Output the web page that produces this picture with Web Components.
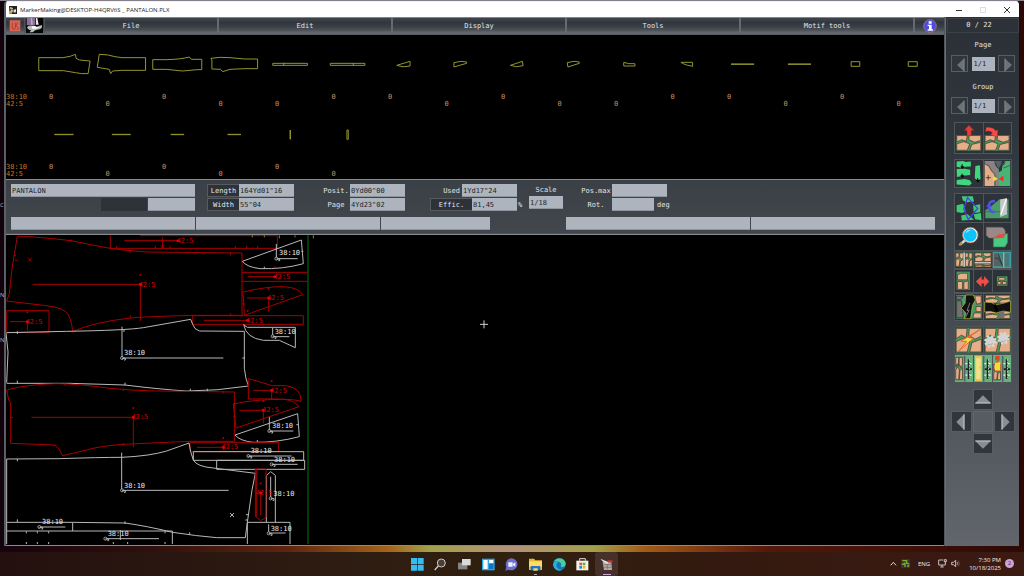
<!DOCTYPE html>
<html lang="en">
<head>
<meta charset="utf-8">
<title>MarkerMaking</title>
<style>
html,body{margin:0;height:100%}
body{font-family:"DejaVu Sans Mono",monospace;font-size:7px;line-height:8px;color:#e2e5e8;background:#14030c}
</style>
</head>
<body>
<mm-desktop></mm-desktop>
<script>
const BASE = `*{box-sizing:border-box}button,input{font:inherit;color:inherit;margin:0;padding:0;border:0;border-radius:0;background:none;min-width:0}svg{display:block}`;
function define(name, html, setup) {
  customElements.define(name, class extends HTMLElement {
    constructor() {
      super();
      this.attachShadow({mode: 'open'});
    }
    connectedCallback() {
      this.shadowRoot.innerHTML = `<style>${BASE}</style>` + (typeof html === 'function' ? html(this) : html);
      if (setup) setup(this);
    }
  });
}

/* ---------- title bar ---------- */
define('mm-titlebar', `
<style>
:host{display:flex;align-items:center;height:16px;background:#fff;color:#1c1c1c;font-family:"Open Sans","Noto Sans",sans-serif;padding-left:3px;border-top:1px solid #f0f0f0}
h1{font:inherit;font-size:6px;margin:0 auto 0 3px}
button{width:24px;height:14px;display:grid;place-items:center}
</style>
<svg width="8" height="8" viewBox="0 0 24 24"><path fill="#222" d="M0 0h24v24H2z"/><path fill="#d9c9a0" d="M3 3l9 3v5l8-3v12l-12-2-4-7z"/><path fill="#d9a52a" d="M0 15h9v8H0z"/><path fill="#eee" d="M12 12l9-3v9z"/><path stroke="#222" stroke-width="2" d="M3 10h17M14 2l-2 20"/></svg>
<h1>MarkerMaking@DESKTOP-H4QRV6S _ PANTALON.PLX</h1>
<button aria-label="Minimize"><svg width="6" height="6"><path d="M0 3.5h6" stroke="#333"/></svg></button>
<button aria-label="Maximize" disabled><svg width="6" height="6"><path d="M.5.5h5v5h-5z" fill="none" stroke="#ddd"/></svg></button>
<button aria-label="Close"><svg width="6" height="6"><path d="M0 0l6 6M6 0L0 6" stroke="#333"/></svg></button>`);

/* ---------- menu bar ---------- */
define('mm-menubar', `
<style>
:host{display:flex;height:17px;background:linear-gradient(#80858a 0 1px,#3c4249 1px 3px,#2f353b 5px,#3b4147 60%,#52575e 14px,#63676c 15px)}
button{display:grid;place-items:center;flex:1;border-right:2px solid #666a6e;height:15px;margin-top:1px}
.tool{flex:none;width:19px;border-right:1px solid #4c5157}
.tool+.tool{width:20px}
.info{flex:none;width:29px;border:0}
</style>
<button class="tool" aria-label="Quit"><svg width="12" height="12" viewBox="0 0 36 36"><path fill="#d96454" d="M2 1h32v33H2z"/><path d="M10 8v17c2 5 8 3 9-1V8M26 7l-5 10 8 8-5 5" fill="none" stroke="#8f2d25" stroke-width="2"/></svg></button>
<button class="tool" aria-label="Marker"><svg width="17" height="15" viewBox="0 0 51 45"><path fill="#050505" d="M0 0h51v45H0z"/><path fill="#8a6f9b" d="M2 0h26v22H2z"/><path fill="#b6a5c2" d="M14 0h4l3 20h-6z"/><path fill="#e8e8e8" d="M30 0h4l4 20h-8z"/><path fill="#b9bcbc" d="M3 28q4-6 14-5l16 3 14-5q4 8-6 13l-12 2-9 7H10l6-6q-11-1-13-9z"/><path fill="#f7f7f7" d="M17 24q10-2 14 3l11-1-12 7-12-1z"/></svg></button>
<button>File</button><button>Edit</button><button>Display</button><button>Tools</button><button>Motif tools</button>
<button class="info" aria-label="Information"><svg width="14" height="14" viewBox="0 0 42 42"><circle cx="21" cy="21" r="19" fill="#4b4de0" stroke="#c87a7c" stroke-width="2"/><path fill="#fff" d="M17 7h9v7h-9zM14 17h12v14h4v4H14v-4h4v-10h-4z"/></svg></button>`);

/* ---------- piece bin ---------- */
const BIN = [[
 'M118 173H190Q215 170 228 163L230 175 240 180 272 183 266 221Q245 222 228 218L192 212H118z',
 'M298 163Q325 163 345 170L366 173H437V211H366L338 213 332 221 328 208 292 202z',
 'M460 179H500Q545 178 570 171L576 178H607V209H592L550 213 500 208H460z',
 'M633 175Q660 170 690 173L735 177H773V206H735L690 208 668 215 662 208 636 207 636 180z',
 'M820 190H924V196H820zM853 188V197',
 'M991 190H1095V196H991zM1060 189V197',
 'M1192 196L1232 184V198Q1210 204 1192 196z',
 'M1362 188Q1385 181 1400 186L1400 190 1362 201z',
 'M1533 196L1569 184 1571 197Q1550 204 1533 196z',
 'M1702 188Q1725 181 1738 186L1738 190 1704 201z',
 'M1873 187L1888 191 1906 191 1907 198H1873z',
 'M2043 187H2078V199L2060 195 2050 191z',
 'M2195 192H2264M2195 193H2264',
 'M2364 192H2433M2364 193H2433',
 'M2555 185H2581V199H2555z',
 'M2725 185H2752V199H2725z'],
 ['M165 403H222M165 404H222','M336 403H392M336 404H392','M514 403H554M514 404H554','M683 403H723M683 404H723',
 'M872 390V418M873 390V418','M1041 390H1045V418H1041z']];
/* zero-based columns whose count belongs to size 42:5 */
const LOWER = [[1,3,4,7,9,10,13,15],[1,3,5]];
define('mm-bin', () => `
<style>
:host{display:block;background:#000;border-top:1px solid #5a5f65;border-bottom:1px solid #888c90;padding-bottom:1px}
.row{display:grid;grid-template-columns:30px 1fr;line-height:7px}
.size{align-self:end;color:#c47628}
.cells{display:grid;grid-template-columns:repeat(16,minmax(0,1fr));padding-right:4px}
.n{height:14px;padding-left:13px;color:#c2906c}
.odd .n{padding-top:7px}
svg{width:100%;overflow:visible}
.first svg{height:59px}.second svg{height:56px}
path{fill:none;stroke:#94942e;stroke-width:3}
</style>` + BIN.map((row, r) => `<div class="row ${r ? 'second' : 'first'}"><div class="size">38:10<br>42:5</div><div class="cells">${
 row.map((d, i) => `<div class="${LOWER[r].includes(i) ? 'odd' : 'even'}"><svg viewBox="${110 + 169.5 * i} ${r ? 324 : 105} 169 ${r ? 168 : 177}"><path d="${d}"/></svg><div class="n">0</div></div>`).join('')
 }</div></div>`).join(''));

/* ---------- marker information ---------- */
define('mm-info', `
<style>
:host{display:block;height:54px;background:linear-gradient(#3a4046,#42474d);border-bottom:1px solid #4c5157;padding:4px 9px 0 5px}
.top{display:flex;align-items:flex-start;height:33px}
.g{display:grid;grid-auto-rows:13px;row-gap:1px;align-items:center}
input{background:#adb4be;color:#22262a;height:13px;width:100%;padding:0 1px;box-shadow:inset 0 -1px #9096a0}
.g button{background:#2d3239;height:13px;border:1px solid #575b60;border-right:0}
label{white-space:nowrap}
.name{width:184px}
.name div{display:grid;grid-template-columns:46px 47px;gap:1px;justify-content:end}
.name i{background:#2e333a;height:13px}
.len{grid-template-columns:32px 55px;margin-left:12px}
.pos{grid-template-columns:28px 55px;margin-left:28px}
.pos label{text-align:center}
.used{width:94px;margin-left:25px}
.used div{display:grid;align-items:center}
.used .a{grid-template-columns:32px 55px}
.used .a label{text-align:right;padding-right:2px}
.used .b{grid-template-columns:42px 45px 7px}
.used span{padding-left:1px}
.scale{width:34px;margin-left:5px;text-align:center;grid-auto-rows:11px 13px}
.rot{grid-template-columns:32px 42px 18px;margin-left:17px}
.rot label{text-align:center}
.rot .wide{grid-column:2/4;width:55px}
.rot span{padding-left:3px}
.bars{display:grid;grid-template-columns:184fr 184fr 108fr 74fr 184fr 184fr;column-gap:1px}
.bars .gap{grid-column:5}
</style>
<div class="top">
<div class="g name"><input aria-label="Marker name" value="PANTALON"><div><i></i><input aria-label="Variant"></div></div>
<div class="g len"><button id="bl">Length</button><input aria-labelledby="bl" value="164Yd01&quot;16"><button id="bw">Width</button><input aria-labelledby="bw" value="55&quot;04"></div>
<div class="g pos"><label for="posit">Posit.</label><input id="posit" value="0Yd00&quot;00"><label for="page">Page</label><input id="page" value="4Yd23&quot;02"></div>
<div class="g used"><div class="a"><label for="used">Used</label><input id="used" value="1Yd17&quot;24"></div><div class="b"><button id="be">Effic.</button><input aria-labelledby="be" value="81,45"><span>%</span></div></div>
<div class="g scale"><label for="scale">Scale</label><input id="scale" value="1/18"></div>
<div class="g rot"><label for="pm">Pos.max</label><input id="pm" class="wide"><label for="rot">Rot.</label><input id="rot"><span>deg</span></div>
</div>
<div class="bars"><input aria-label="Message 1"><input aria-label="Message 2"><input aria-label="Message 3"><input class="gap" aria-label="Message 4"><input aria-label="Message 5"></div>`);

/* ---------- marker canvas; drawing units are a third of a pixel ---------- */
const tag = (x, y, dx, dy, c, t) => `<circle class="d${c}" cx="${dx}" cy="${dy}" r="4.5"/><text class="${c}" x="${x}" y="${y}">${t}</text>`;
const W = (x, y, dx, dy) => tag(x, y, dx, dy, 'w', '38:10') + `<path class="wl" d="M${dx} ${dy + 1}h10v5h-4"/>`;
const R = (x, y, dx, dy) => tag(x, y, dx, dy, 'r', '42:5') + `<path class="rl" d="M${dx - 3} ${dy - 28}h6m-3 -3v6"/>`;
define('mm-canvas', () => `
<style>
:host{display:block;background:#000;border-top:1px solid #888c90;border-bottom:1px solid #888c90;min-height:0;overflow:hidden}
svg{width:938px;height:309px}
path{fill:none;stroke-width:3}
.wl{stroke:#b8b8b8}.rl{stroke:#a80000}.grn{stroke:#045804;stroke-width:4}
text{font-size:21px;font-family:"DejaVu Sans Mono",monospace}
.w{fill:#e8e8e8}.r{fill:#d40000}.dw{fill:#000;stroke:#ddd;stroke-width:2}.dr{fill:#f00000}
</style>
<svg viewBox="18 705 2814 927" role="img" aria-label="Marker layout">
<g transform="translate(0 696)">
<path class="rl" d="M20 207L28 185 36 110 52 13 75 13Q150 18 213 26 270 38 331 49 370 55 440 60L726 63V250H580Q430 254 393 258 280 270 218 299 214 250 195 238 180 225 130 220L20 207M98 157H421V268M331 11V49H832V11M420 11H832M373 26H536M488 16V50M482 40l12 10m0-10l-12 10M84 77l12 12m0-12l-12 12M20 236H147V301H20zM30 269H82V295M726 121H922M726 148H922M744 134H825M726 181Q800 163 850 164 895 166 908 188L733 250 730 195zM741 198H806V238M578 251H910V277H578zM611 265H743M391 54v8M692 62v8M391 250v8M692 244v8M41 70h7M45 85h7M350 42v7M466 42v7M510 42v7M706 42v7M740 42v7M773 42v7M213 22v8M728 216h7"/>
<path class="wl" d="M904 24L910 95Q850 112 780 110 740 105 727 88zM829 36V80H893M793 104v7M904 58h6M20 302L200 298Q380 295 430 287L572 262 578 277Q582 292 598 297L733 298V409L738 440 745 460M18 302L24 360 20 452M731 278L742 286H886V347L838 325H790Q738 318 731 278M818 288V314H868M366 284V378H670M52 298v8M372 292v8M727 378h8"/>
${R(416,164,421,157)}${R(530,33,534,26)}${R(77,276,82,269)}${R(820,141,824,134)}${R(801,205,806,198)}${R(738,272,743,265)}${W(837,70,829,80)}${W(824,305,818,313)}</g>
<g transform="translate(0 1020)">
<path class="wl" d="M20 130H210L375 135Q480 148 560 153 650 153 745 138M705 285L893 221 898 290Q830 308 760 307 720 303 705 285M808 230V273H880M52 122v8M375 128v8M571 146v8M622 146v8M772 300v8M889 254h7"/>
<path class="rl" d="M20 150Q80 133 170 131 240 132 330 145 400 152 470 153L703 156V304H570Q430 310 370 313 300 318 260 330L187 347Q178 322 165 315L32 310V188L26 180zM94 232H400V322M745 116Q780 125 815 137H860Q905 145 903 184 880 175 745 177zM760 151H815V178M700 192Q760 178 850 178 880 180 897 200L708 264zM718 211H790V250M570 307H836V335H570zM591 322H670V330M32 232h7M195 130v7M370 146v7M669 154v7M370 309v7M700 230h7"/>
${W(372,46,366,54)}${R(394,238,400,232)}${R(810,158,815,151)}${R(786,217,790,211)}${W(816,265,808,273)}${R(664,327,670,322)}</g>
<g transform="translate(0 1320)">
<path class="wl" d="M20 57L180 56Q300 52 365 52 450 48 500 33L567 9 572 35 580 60Q590 80 640 84L766 100 756 150 742 247 736 293H650Q590 288 518 277 440 258 375 249L218 247H20V57M218 247V273M20 273H517V312M20 247V312M580 35H911V61H580zM745 48H875M650 61H914V88H650zM815 73H893M365 38V151H686M799 247V107L812 95 826 106V247M812 110V175M742 312V247H870V312M806 253V279H857M118 261H196M316 296H477M361 270V300M690 219l12 12m0-12l-12 12M79 274v6M112 274v6M146 274v6M79 306v6M112 306v6M146 306v6M340 306v6M383 306v6M495 306v6M495 274v6M52 238v8M52 57v7M375 244v8M569 277v7M738 224h8M736 240h8"/>
<path class="rl" d="M766 87H798V232L782 242 766 230zM770 87V230M782 164V225"/>
${W(752,39,745,48)}${W(822,65,815,73)}${W(372,144,366,151)}${R(767,164,782,158)}${W(820,167,812,175)}${W(126,252,118,261)}${W(323,289,316,296)}${W(812,272,806,280)}</g>
<path class="grn" d="M924 705V1632"/><path stroke="#8a8a24" d="M940 706v9M757 706v6M793 706v6M838 706v9M885 706v6"/>
<path stroke="#d0d0d0" d="M1440 973h24M1452 961v24"/>
</svg>`);

/* ---------- side panel ---------- */
const skin = (x, y, w, h) => { const X = f => (x + w * f).toFixed(1), Y = f => (y + h * f).toFixed(1); return `<path fill="#4a9a68" d="M${x} ${y}h${w}v${h}h-${w}z"/><g fill="#e6ae88" stroke="#3a2c20" stroke-width="2"><path d="M${X(.02)} ${Y(.03)}L${X(.44)} ${Y(.03)} ${X(.4)} ${Y(.4)} ${X(.22)} ${Y(.3)} ${X(.02)} ${Y(.44)}z"/><path d="M${X(.52)} ${Y(.03)}L${X(.98)} ${Y(.03)} ${X(.98)} ${Y(.34)} ${X(.74)} ${Y(.46)} ${X(.5)} ${Y(.3)}z"/><path d="M${X(.02)} ${Y(.56)}L${X(.3)} ${Y(.42)} ${X(.54)} ${Y(.56)} ${X(.44)} ${Y(.97)} ${X(.02)} ${Y(.97)}z"/><path d="M${X(.62)} ${Y(.6)}L${X(.98)} ${Y(.46)} ${X(.98)} ${Y(.97)} ${X(.54)} ${Y(.97)}z"/></g>`; };
const gear = (x, y) => `<circle cx="${x}" cy="${y}" r="15" fill="#cfcfcf" stroke="#d8d8d8" stroke-width="9" stroke-dasharray="6 5.8"/><circle cx="${x}" cy="${y}" r="14" fill="#d4d2d2"/><path d="M${x-8} ${y+9}q8 5 15-3" stroke="#999" stroke-width="2" fill="none"/>`;
const rail = x => `<path fill="#55606a" d="M${x+28} 326h5v78h-5z"/><path stroke="#eee" stroke-width="4" fill="none" d="M${x+33} 349h6m8 0h6M${x+33} 384h6m8 0h6"/><path stroke="#222" stroke-width="5" fill="none" d="M${x+34} 366h20M${x+43} 336v60"/><path stroke="#ddd" stroke-width="3" stroke-dasharray="4 5" d="M${x+46} 336v56"/>`;
const ICONS = {
 place: ['Unplace piece','33 32 85 92', skin(37,69,77,48)+'<path fill="#e33d38" stroke="#8c2320" d="M76 39L92 55H83V71H70V55H61z"/>'],
 turn: ['Return piece','120 32 85 92', skin(122,69,77,48)+'<path fill="#ef4d47" stroke="#8c2320" d="M127 45q22-2 29 11l7-3-2 23-21-8 6-5q-6-9-22-5z"/>'],
 drop: ['Drop pieces','33 143 85 84','<g fill="#3fd67c"><path d="M38 148l20-2 8 3 16-1v15l-18 1-8 4-18-4zM38 171l24-1 18 3v17l-20 2-21 4zM38 205l25-3 16 4 6 10-8 6-39-3zM96 162l14-3 2 44-11 4-7-8z"/></g><path stroke="#000" stroke-width="3" fill="#000" d="M55 156v12l-4-4h9l-5 6M55 186v10l-4-4h9l-5 6M103 199v11l-4-4h9l-5 6"/>'],
 gap: ['Adjust gap','120 143 85 84','<path fill="#e6ae88" d="M122 155q15 4 19 20l12 12v37h-31z"/><path fill="#8b8283" d="M122 146h30q2 18 14 26v52h-13v-34l-12-15q-3-17-19-20z"/><path fill="#56616a" d="M152 146h23q-2 15-10 24z"/><path fill="#49b575" d="M177 161q9-4 7-15h17v78h-36v-42l10-6z"/><path d="M123 155q15 4 19 20l12 12v37M176 158q10-5 10-12M180 168l20-8" fill="none" stroke="#555" stroke-width="3"/><path stroke="#111" stroke-width="2" d="M126 198h15M133 190v16"/><path fill="#eedb43" d="M148 192l15 9-15 10z"/><path fill="#ee2e2e" d="M180 192v18l-15-9z"/>'],
 lasso: ['Select area','33 245 85 84','<g fill="#3fc977"><path d="M54 252h34l4 16-25 2-10-6zM38 279l20-4 8 22-10 6-18-3zM52 311l20-4 20 17-38 2zM89 280l22-4v25l-20 2zM91 307l22-4 2 22-20-3z"/></g><path fill="none" stroke="#4443e6" stroke-width="4" d="M72 256l31 33-29 34-14-32z"/>'],
 flip: ['Flip piece','120 245 85 84','<path fill="#4b9b6b" d="M124 295l15-10 29-24h28v58h-72z"/><path stroke="#317a50" stroke-width="3" d="M124 299h73"/><path fill="#c3c8ca" d="M170 262l21-5v50l-21 8z"/><path stroke="#fff" stroke-width="4" d="M172 308l17-48"/><path fill="none" stroke="#4e52e2" stroke-width="8" d="M154 267q-22-2-18 20 2 14 17 13"/><path fill="#4e52e2" d="M126 284l9-10 11 10z"/>'],
 zoom: ['Zoom','33 332 85 84','<path stroke="#b5e0e0" stroke-width="8" d="M49 398l19-16"/><path stroke="#c08a4c" stroke-width="7" d="M46 400l9-8"/><circle cx="80" cy="369" r="22" fill="#0cc2ff" stroke="#e8f4ee" stroke-width="4"/><circle cx="81" cy="369" r="24" fill="none" stroke="#aa5a34" stroke-width="2"/><path fill="#a5e9ff" d="M66 364q4-14 16-9-9 1-16 9z"/>'],
 overlap: ['Overlap','120 332 85 84','<path fill="#998a88" stroke="#6e6362" stroke-width="2" d="M127 345h44q15 0 15 18v15h-50l-9-8z"/><path fill="#49c981" stroke="#34835a" stroke-width="2" d="M149 377l44-13v27l-8 14h-36z"/><path fill="#ef493e" d="M150 379l15-13h20l-3 11z"/>'],
 cutv: ['Vertical cut','33 10 57 52', skin(35,12,25,46)+skin(65,12,23,46)+'<path stroke="#eee" stroke-width="4" d="M62 12v46"/>'],
 cuth: ['Horizontal cut','91 10 57 52', skin(93,12,53,30)+skin(93,48,53,11)+'<path stroke="#ddd" stroke-width="4" d="M93 45h52"/>'],
 align: ['Align','148 10 57 52','<path fill="#389f9d" d="M148 10h57v52h-57z"/><path fill="#5a5f60" d="M151 14h14l16 42h-30z"/><path fill="#47777e" d="M170 14h30v44h-16z"/><path stroke="#222" stroke-width="2" fill="none" d="M153 30h12l10 18M165 14l14 44"/><path stroke="#e2c84b" stroke-width="3" d="M182 12v48"/>'],
 fit: ['Fit','33 63 57 67','<path fill="#4a9a68" d="M38 68h42v56H38z"/><g fill="#e6ae88" stroke="#3a2c20" stroke-width="2"><path d="M41 78l10-5h22v20H41zM41 98h16v24H41zM61 100l14-4v26H61z"/></g>'],
 width: ['Spread','91 63 57 67','<path fill="#f24c46" d="M97 98l18-17v11h8V81l16 17-16 17v-11h-8v11z"/>'],
 small: ['Reduce','148 63 57 67','<path fill="#4a9a68" stroke="#1d241f" stroke-width="2" d="M159 81h36v31h-36z"/><g fill="#e6ae88" stroke="#3a2c20" stroke-width="2"><path d="M166 86h20v8h-20zM163 98h10v9h-10zM178 98h12v9h-12z"/></g>'],
 bolt: ['Split marker','33 135 85 81', '<path fill="#4a9a68" d="M36 138h80v74H36z"/><path fill="#74706d" stroke="#222" stroke-width="2" d="M38 156h15l6 53H38zM38 141l20 2-6 8-14 3z"/><g fill="#e6ae88" stroke="#3a2c20" stroke-width="2"><path d="M94 141h20v22l-14 4zM98 174h16v16H98zM92 194h22v16H88z"/></g><path fill="#111" stroke="#c1ca37" stroke-width="2" d="M66 138h24l6 16-9 16-6 42H61l6-17-15-16 12-15z"/><path stroke="#787878" stroke-width="3" d="M79 163l-9 24 7-2-12 24" fill="none"/>'],
 tear: ['Join marker','120 135 85 81',skin(123,138,79,26)+skin(123,188,79,24)+'<path fill="#111" stroke="#bfc33c" stroke-width="2" d="M122 160l22 2 10 7 26-5 22-7v35l-22-4-22 6-20-5-16 2z"/><path fill="#737070" d="M166 190h17v20h-17z"/><path stroke="#000" stroke-width="8" d="M152 168l9 20"/>'],
 flash: ['Automatic','33 237 85 81',skin(35,239,81,78)+'<path d="M110 245L51 281l18 1-25 31 46-41-16-2z" fill="#f2de45" stroke="#e9602d" stroke-width="3"/>'],
 gears: ['Process','120 237 85 81',skin(122,239,81,78)+gear(140,282)+gear(180,272)],
 r1: ['Rail placement','33 323 57 82','<path fill="#67b17c" d="M33 323h57v82H33z"/>'+skin(35,328,22,72)+rail(33)],
 r2: ['Rail highlight','91 323 57 82','<path fill="#67b17c" d="M91 323h57v82H91z"/><path fill="#e6c75b" d="M94 326h22v76H94z"/><path fill="#efe08b" d="M98 333h14v24l-7 2 7 8v29H98z"/>'+rail(91)],
 r3: ['Rail paint','148 323 57 82','<path fill="#67b17c" d="M148 323h57v82h-57z"/>'+skin(150,350,22,50)+'<path fill="#e64326" d="M155 326h14v14h-6l9 12v20h-18v-22l7-11-6-1z"/><path fill="#f3de36" d="M154 347l17-3v26h-17z"/>'+rail(148)],
};
define('mm-icon', el => { const [label, box, art] = ICONS[el.getAttribute('name')]; return `
<style>:host{display:block;min-width:0;min-height:0}button{width:100%;height:100%;display:block;background:#2d3338;overflow:hidden}svg{width:100%;height:100%}</style>
<button aria-label="${label}"><svg viewBox="${box}" preserveAspectRatio="none">${art}</svg></button>`; });
define('mm-arrow', el => { const a = {left:180,right:0,up:270,down:90}[el.getAttribute('dir')]; const big = el.hasAttribute('big'); return `
<style>:host{display:block}button{width:100%;height:100%;display:grid;place-items:center;background:#31363d;border:1px solid #585d63}</style>
<button aria-label="${el.getAttribute('label')}"><svg width="18" height="18" viewBox="-27 -27 54 54"><g transform="rotate(${a})"><path fill="${big ? '#8b8e91' : '#687478'}" d="M-10-${big?24:20}L${big?14:12} 0L-10 ${big?24:20}z"/><path stroke="${big ? '#c4ced0' : '#7b8486'}" stroke-width="3" d="M-9-${big?23:19}V${big?23:19}"/></g></svg></button>`; });
define('mm-pager', el => { const l = el.getAttribute('label'); return `
<style>:host{display:block;text-align:center}label{display:block;height:8px;margin-bottom:6px}
.r{display:flex;justify-content:space-between;align-items:center;height:17px;width:64px;margin:0 auto}mm-arrow{width:17px;height:17px}mm-arrow{overflow:hidden}
input{width:23px;height:14px;background:#adb4be;color:#22262a;padding:0 2px}</style>
<label for="v">${l}</label><div class="r"><mm-arrow dir="left" label="Previous ${l}"></mm-arrow><input id="v" value="1/1"><mm-arrow dir="right" label="Next ${l}"></mm-arrow></div>`; });
const grp = (cls, names) => `<div class="grp ${cls}">${names.split(' ').map(n => `<mm-icon name="${n}"></mm-icon>`).join('')}</div>`;
define('mm-sidebar', () => `
<style>
:host{display:block;border-left:1px solid #696e73;background:linear-gradient(#2b3037,#30363d 22%,#4c5158 68%,#62656c);padding:1px 0 0 1px}
.count{height:15px;line-height:13px;text-align:center;background:#2d3238;border:1px solid #3c4148;margin-bottom:8px;padding-right:8px}
mm-pager+mm-pager{margin-top:11px}
.grp{display:grid;grid-template-columns:1fr 1fr;gap:1px;width:58px;margin:0 auto;background:#50555a;border:1px solid #50555a}
.three{grid-template-columns:repeat(3,1fr)}
.h18{height:18px}.h23{height:24px}.h27{height:28px}.h29{height:29px}.h32{height:32px}.h58{height:58px;grid-template-rows:1fr 1fr}
.m5{margin-top:5px}.m9{margin-top:8px}
.pad{display:grid;grid-template-columns:repeat(3,1fr);grid-template-rows:repeat(3,21px);grid-template-areas:". u ." "l c r" ". d .";gap:1px;width:64px;margin:6px auto 0}
.pad i{grid-area:c;background:#575c62;border:1px solid #60656b}
.u{grid-area:u}.l{grid-area:l}.r{grid-area:r}.d{grid-area:d}
</style>
<div class="count">0 / 22</div>
<mm-pager label="Page"></mm-pager><mm-pager label="Group"></mm-pager>
${grp('h32 m9','place turn')}${grp('h29 m5','drop gap')}${grp('h58 m5','lasso flip zoom overlap')}${grp('three h18','cutv cuth align')}${grp('three h23','fit width small')}${grp('h27','bolt tear')}${grp('h27 m5','flash gears')}${grp('three h29','r1 r2 r3')}
<div class="pad"><mm-arrow big class="u" dir="up" label="Up"></mm-arrow><mm-arrow big class="l" dir="left" label="Left"></mm-arrow><i></i><mm-arrow big class="r" dir="right" label="Right"></mm-arrow><mm-arrow big class="d" dir="down" label="Down"></mm-arrow></div>`);

/* ---------- taskbar ---------- */
const APPS = [
 ['Start','<path fill="#35bdf2" d="M0 0h18v18H0zM20 0h18v18H20zM0 20h18v18H0zM20 20h18v18H20z"/>'],
 ['Search','<circle cx="22" cy="15" r="12" fill="#4c3f35" stroke="#ccc" stroke-width="3"/><path stroke="#ccc" stroke-width="4" d="M13 24L2 36"/>'],
 ['Task view','<path fill="#858585" d="M0 14h28v20H0z"/><path fill="#d9d9d9" d="M12 3h26v19H12z"/>'],
 ['Widgets','<path fill="#2aa5e8" d="M0 2h38v35H0z"/><path fill="#f5f9fc" d="M4 6h13v27H4z"/><path fill="#fff" d="M21 6h13v9H21z"/><path fill="#1373c4" d="M21 18h13v15H21z"/>'],
 ['Chat','<path fill="#6b6fd0" d="M20 1a18 18 0 11-9 34L1 38l3-11A18 18 0 0120 1z"/><path fill="#f0f0fb" d="M10 13h13v13H10zM24 17l7-4v13l-7-4z"/>'],
 ['Files','<path fill="#e9b635" d="M0 2h15l4 5h20v29H0z"/><path fill="#ffdc67" d="M0 10h39v17H0z"/><path fill="#1b78c9" d="M5 24h29v13H5z"/><path fill="#ffdc67" d="M13 31h13v7H13z"/>'],
 ['Edge','<circle cx="19" cy="19" r="19" fill="#1672bd"/><path fill="#49cf9b" d="M2 11Q12-3 27 2q12 6 11 18-4 9-15 6 5-11-5-15-10-3-16 0z"/><path fill="#28b1d6" d="M0 21q3-14 18-10-10 4-7 15 4 9 16 9-14 7-23-5z"/>'],
 ['Store','<path fill="none" stroke="#ddd" stroke-width="3" d="M11 8V2h17v6"/><path fill="#f4f2ee" d="M1 8h36v29H1z"/><path fill="#e5553a" d="M10 14h8v8h-8z"/><path fill="#66ae3b" d="M20 14h8v8h-8z"/><path fill="#248bd2" d="M10 24h8v8h-8z"/><path fill="#f3b633" d="M20 24h8v8h-8z"/>'],
 ['MarkerMaking','<path fill="#b7a9a7" d="M8 12h26l2 24H12z"/><path fill="#e9e5e4" d="M1 2l18 8 6 2-3 6-14-8z"/><path fill="#c2353a" d="M23 7h14v7l-14-1z"/><path stroke="#6f6665" stroke-width="2" d="M12 20h22M12 28h22M22 18v16"/>']];
define('mm-taskbar', () => `
<style>
:host{display:grid;grid-template-columns:1fr 213px 1fr;align-items:center;height:25px;background:linear-gradient(90deg,#24100e,#2d1b12 30%,#30200f 50%,#33190f 70%,#3b1a12);font-family:"Open Sans","Noto Sans",sans-serif;color:#f2eeee}
nav{grid-column:2;display:grid;grid-template-columns:repeat(9,1fr);height:100%;padding-bottom:1px}
nav button{display:grid;place-items:center;position:relative}
nav button:last-child{background:#45312a;border-radius:3px}
nav button:nth-child(6)::after,nav button:last-child::after{content:"";position:absolute;bottom:1px;width:3px;height:1px;background:#b0a8a4}
nav button:last-child::after{width:8px;background:#d8a9de}
.tray{display:flex;justify-content:flex-end;align-items:center;padding:0 10px 2px 0}
.tray svg{flex:none}
time{text-align:right;line-height:8px;margin:0 4px 0 9px;font-size:6px}
.lang{margin:0 8px 0 8px;font-size:6px}
.badge{width:9px;height:9px;border-radius:50%;background:#cba4d6;color:#4a2a52;text-align:center;line-height:9px;font-size:6px}
svg+svg.app,.vol{margin-left:4px}
</style>
<nav aria-label="Apps">${APPS.map(a => `<button aria-label="${a[0]}"><svg width="13" height="13" viewBox="0 0 39 39">${a[1]}</svg></button>`).join('')}</nav>
<div class="tray">
<svg width="7" height="5" viewBox="0 0 21 15"><path d="M2 13l8-9 8 9" fill="none" stroke="#ddd" stroke-width="3"/></svg>
<svg class="app" width="9" height="9" viewBox="0 0 27 27"><path fill="#243b32" d="M0 0h27v27H0z"/><path stroke="#8fa632" stroke-width="4" fill="none" d="M4 5h13v8l8 2M3 17l9-4v11M18 21h7"/></svg>
<span class="lang">ENG</span>
<svg width="9" height="9" viewBox="0 0 27 27"><path d="M16 3H2v15h20v-6M7 24h10M12 18v6M19 2h6v6h-6zM22 8v5" fill="none" stroke="#ddd" stroke-width="2.5"/></svg>
<svg class="vol" width="9" height="9" viewBox="0 0 27 27"><path d="M2 10h5l7-6v19l-7-6H2z" fill="none" stroke="#ddd" stroke-width="2.5"/><path d="M18 9q4 4 0 9" stroke="#ddd" fill="none" stroke-width="2"/><path d="M22 5q6 8 0 17" stroke="#8a6a62" fill="none" stroke-width="2"/></svg>
<time>7:30 PM<br>10/18/2025</time><span class="badge">2</span>
</div>`);

/* ---------- window and desktop ---------- */
define('mm-window', `
<style>
:host{display:flex;flex-direction:column;border-left:2px solid #5b6066;border-radius:4px 4px 0 0;overflow:hidden;background:#3c4147}
.body{flex:1;min-height:0;display:grid;grid-template-columns:minmax(0,1fr) 74px}
.main{display:flex;flex-direction:column;min-height:0;border-right:1px solid #50555a}
mm-canvas{flex:1}
</style>
<mm-titlebar></mm-titlebar><div class="body"><div class="main"><mm-menubar></mm-menubar><mm-bin></mm-bin><mm-info></mm-info><mm-canvas></mm-canvas></div><mm-sidebar></mm-sidebar></div>`);
define('mm-desktop', `
<style>
:host{display:flex;flex-direction:column;height:100vh;overflow:hidden;position:relative;background:linear-gradient(90deg,#12020c 0 50%,#2c0805 99%);border-top:1px solid #86808a}
mm-window{flex:1;margin:0 5px 0 4px;min-height:0;position:relative}
/* ends of the desktop icons' captions, showing beside the window */
.cap{position:absolute;left:0;width:4px;overflow:hidden;color:#b9b2b8;font-family:"Open Sans","Noto Sans",sans-serif;font-size:6px}
.c1{top:200px}.c2{top:290px}.c3{top:335px}
.wall{height:6px;background:linear-gradient(90deg,#16030e,#30100d 15%,#5e2410 28%,#a3641a 38%,#a2a04a 42%,#b3917a 50%,#a2a04a 58%,#a35a16 63%,#54180b 75%,#2c0a06)}
</style>
<span class="cap c1">C</span><span class="cap c2">N</span><span class="cap c3">N</span>
<mm-window></mm-window><div class="wall"></div><mm-taskbar></mm-taskbar>`);
</script>
</body>
</html>
